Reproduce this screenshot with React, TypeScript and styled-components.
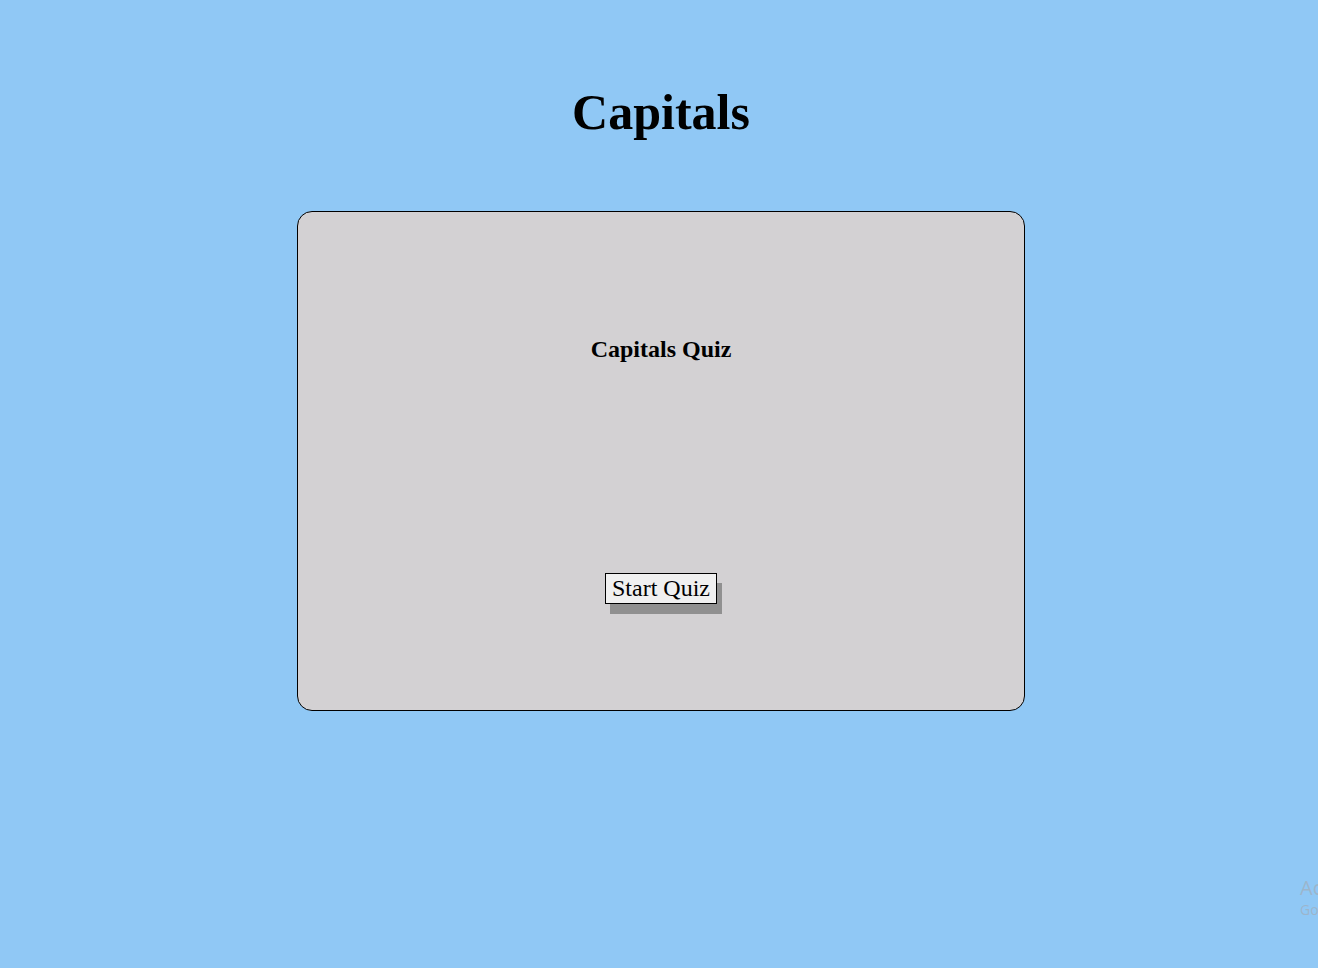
import React from "react";
import styled, { createGlobalStyle } from "styled-components";

const GlobalStyle = createGlobalStyle`
  html, body {
    margin: 0;
    padding: 0;
    background: #90c8f5;
    overflow: hidden;
  }
  body {
    font-family: "Liberation Serif", "Times New Roman", serif;
    color: #000;
  }
`;

const Page = styled.div`
  position: relative;
  width: 1318px;
  height: 968px;
  box-sizing: border-box;
  padding-left: 4px;
  display: flex;
  flex-direction: column;
  align-items: center;
  overflow: hidden;
`;

const Title = styled.h1`
  margin: 84px 0 70px;
  font-size: 50px;
  line-height: 57px;
  font-weight: bold;
`;

const Card = styled.section`
  box-sizing: border-box;
  width: 728px;
  height: 500px;
  border: 1px solid #000;
  border-radius: 15px;
  background: #d3d1d3;
  display: flex;
  flex-direction: column;
  align-items: center;
  padding-top: 124px;
`;

const QuizTitle = styled.h2`
  margin: 0 0 210px;
  font-size: 24px;
  line-height: 27px;
  font-weight: bold;
`;

const StartButton = styled.button`
  font-family: "Liberation Serif", "Times New Roman", serif;
  font-size: 24px;
  line-height: 27px;
  padding: 1px 6px;
  border: 1px solid #000;
  border-radius: 0;
  background: #f0f0f0;
  color: #000;
  box-shadow: 5px 10px 0 #909090;
  cursor: pointer;
`;

const Watermark = styled.div`
  position: absolute;
  left: 1300px;
  top: 876px;
  font-family: "Open Sans", "Noto Sans", sans-serif;
  color: rgba(160, 175, 190, 0.75);
  white-space: nowrap;
  pointer-events: none;
`;

const WatermarkMain = styled.div`
  font-size: 20px;
  line-height: 24px;
`;

const WatermarkSub = styled.div`
  font-size: 14px;
  line-height: 20px;
`;

export default function App() {
  return (
    <>
      <GlobalStyle />
      <Page>
        <Title>Capitals</Title>
        <Card>
          <QuizTitle>Capitals Quiz</QuizTitle>
          <StartButton>Start Quiz</StartButton>
        </Card>
        <Watermark>
          <WatermarkMain>Activate Windows</WatermarkMain>
          <WatermarkSub>Go to Settings to activate Windows.</WatermarkSub>
        </Watermark>
      </Page>
    </>
  );
}
